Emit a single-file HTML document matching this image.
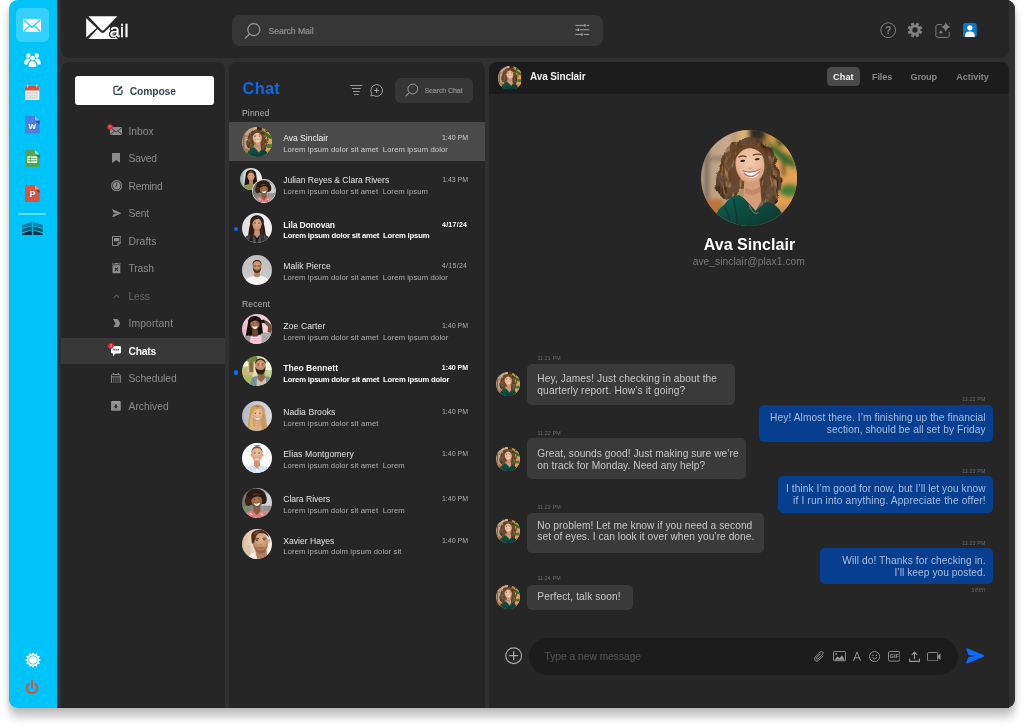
<!DOCTYPE html>
<html lang="en"><head><meta charset="utf-8"><title>Mail – Chats</title>
<style>
html,body{margin:0;padding:0}
body{width:1024px;height:726px;position:relative;overflow:hidden;background:#fff;font-family:"Liberation Sans",sans-serif;-webkit-font-smoothing:antialiased}
#win{position:absolute;left:9px;top:0;width:1006px;height:707.5px;border-radius:8.5px;background:linear-gradient(90deg,#00c3f9 48px,#303030 48px);box-shadow:0 8.5px 8px rgba(0,0,0,.235),0 1px 5px rgba(0,0,0,.09)}
#app{position:absolute;left:0;top:0;width:1024px;height:726px;will-change:transform}
.t{position:absolute;white-space:pre;line-height:1em;margin:0}
.m{-webkit-text-stroke:.22px currentColor}
.av{position:absolute;border-radius:50%;overflow:hidden;display:block}
</style></head>
<body>
<svg width="0" height="0" style="position:absolute" aria-hidden="true"><defs><filter id="soft" x="-5%" y="-5%" width="110%" height="110%"><feGaussianBlur stdDeviation="1.1"/></filter><filter id="soft2" x="-5%" y="-5%" width="110%" height="110%"><feGaussianBlur stdDeviation=".55"/></filter><linearGradient id="g-ava" x1="0" y1="0" x2="1" y2="0"><stop offset="0" stop-color="#b79b82"/><stop offset="0.28" stop-color="#c9a98a"/><stop offset="0.45" stop-color="#b08a68"/><stop offset="0.6" stop-color="#6a5644"/><stop offset="0.74" stop-color="#d89a50"/><stop offset="1" stop-color="#e6aa58"/></linearGradient><radialGradient id="g-avaf" cx=".5" cy=".42" r=".6"><stop offset="0" stop-color="#f3cbb0"/><stop offset=".7" stop-color="#e8b796"/><stop offset="1" stop-color="#cf9674"/></radialGradient><radialGradient id="g-avah" cx=".45" cy=".4" r=".65"><stop offset="0" stop-color="#7a4e2a"/><stop offset=".6" stop-color="#5c3a20"/><stop offset="1" stop-color="#341f12"/></radialGradient><linearGradient id="g-avat" x1="0" y1="0" x2="1" y2="1"><stop offset="0" stop-color="#146050"/><stop offset="0.5" stop-color="#0e4a3e"/><stop offset="1" stop-color="#0a342c"/></linearGradient><filter id="curl" x="-10%" y="-10%" width="120%" height="120%"><feTurbulence type="fractalNoise" baseFrequency=".09" numOctaves="2" seed="4" result="n"/><feDisplacementMap in="SourceGraphic" in2="n" scale="9" xChannelSelector="R" yChannelSelector="G" result="d"/><feTurbulence type="fractalNoise" baseFrequency=".16 .07" numOctaves="3" seed="11" result="m"/><feColorMatrix in="m" type="matrix" values="0 0 0 0 .13  0 0 0 0 .075  0 0 0 0 .04  3.0 0 0 0 -0.95" result="dk"/><feComposite in="dk" in2="d" operator="in" result="dk2"/><feTurbulence type="fractalNoise" baseFrequency=".2 .08" numOctaves="2" seed="23" result="m2"/><feColorMatrix in="m2" type="matrix" values="0 0 0 0 .60  0 0 0 0 .38  0 0 0 0 .19  0 2.8 0 0 -1.72" result="lt"/><feComposite in="lt" in2="d" operator="in" result="lt2"/><feMerge><feMergeNode in="d"/><feMergeNode in="dk2"/><feMergeNode in="lt2"/></feMerge><feGaussianBlur stdDeviation=".45"/></filter><filter id="bgblur" x="-10%" y="-10%" width="120%" height="120%"><feGaussianBlur stdDeviation="2.4"/></filter><filter id="bgblur2" x="0" y="0" width="100%" height="100%"><feGaussianBlur stdDeviation="1.6"/></filter><radialGradient id="skinL" cx=".5" cy=".4" r=".65"><stop offset="0" stop-color="#f0c4a4"/><stop offset=".75" stop-color="#e2aa88"/><stop offset="1" stop-color="#c48a68"/></radialGradient><radialGradient id="skinM" cx=".5" cy=".4" r=".65"><stop offset="0" stop-color="#e0ac88"/><stop offset=".75" stop-color="#cc9572"/><stop offset="1" stop-color="#a87452"/></radialGradient><radialGradient id="skinD" cx=".5" cy=".4" r=".65"><stop offset="0" stop-color="#b07a56"/><stop offset=".75" stop-color="#93603f"/><stop offset="1" stop-color="#6e442c"/></radialGradient><radialGradient id="skinT" cx=".5" cy=".4" r=".65"><stop offset="0" stop-color="#d9a27c"/><stop offset=".75" stop-color="#c18a66"/><stop offset="1" stop-color="#9a6848"/></radialGradient><linearGradient id="g-jul" x1="0" y1="0" x2="1" y2="0"><stop offset="0" stop-color="#aebcc2"/><stop offset="0.35" stop-color="#dcdcd6"/><stop offset="1" stop-color="#efefe9"/></linearGradient><linearGradient id="g-cla" x1="0" y1="0" x2="1" y2="0"><stop offset="0" stop-color="#6e6a62"/><stop offset="0.45" stop-color="#8a9096"/><stop offset="1" stop-color="#b8c0c8"/></linearGradient><linearGradient id="g-lil" x1="0" y1="0" x2="1" y2="0"><stop offset="0" stop-color="#dedee0"/><stop offset="1" stop-color="#f3f3f5"/></linearGradient><linearGradient id="g-mal" x1="0" y1="0" x2="0" y2="1"><stop offset="0" stop-color="#bdbdbd"/><stop offset="1" stop-color="#cecece"/></linearGradient><linearGradient id="g-zoe" x1="0" y1="0" x2="1" y2="0"><stop offset="0" stop-color="#e6bccb"/><stop offset="0.6" stop-color="#efcbd7"/><stop offset="1" stop-color="#f4dbe3"/></linearGradient><linearGradient id="g-the" x1="0" y1="0" x2="1" y2="0.6"><stop offset="0" stop-color="#f0eed0"/><stop offset="0.3" stop-color="#b4bf74"/><stop offset="0.55" stop-color="#e9ecc6"/><stop offset="0.8" stop-color="#a0b660"/><stop offset="1" stop-color="#cdd594"/></linearGradient><linearGradient id="g-nad" x1="0" y1="0" x2="1" y2="0"><stop offset="0" stop-color="#aeb6c2"/><stop offset="0.5" stop-color="#c6ccd6"/><stop offset="1" stop-color="#d8dce2"/></linearGradient><linearGradient id="g-xav" x1="0" y1="0" x2="1" y2="0"><stop offset="0" stop-color="#d9b696"/><stop offset="0.3" stop-color="#ead2ba"/><stop offset="0.7" stop-color="#f2e4d4"/><stop offset="1" stop-color="#fbf6f0"/></linearGradient><radialGradient id="skinX" cx=".55" cy=".3" r=".75"><stop offset="0" stop-color="#e6b892"/><stop offset=".5" stop-color="#cc9670"/><stop offset="1" stop-color="#9a6646"/></radialGradient></defs><symbol id="av-ava" viewBox="0 0 100 100">
<rect width="100" height="100" fill="url(#g-ava)"/>
<g filter="url(#bgblur)">
<rect x="4" y="20" width="4" height="60" fill="#6e6258"/>
<rect x="0" y="28" width="30" height="4" fill="#8a7868"/>
<rect x="2" y="72" width="22" height="16" fill="#b8753a"/>
<rect x="38" y="-4" width="11" height="16" fill="#ddb07a"/>
<rect x="50" y="-4" width="16" height="14" fill="#33291f"/>
<rect x="76" y="8" width="26" height="74" fill="#e2a252"/>
<rect x="84" y="30" width="4" height="18" fill="#5a4630"/>
<path d="M70 12 L98 30 L100 42 L84 34 L72 22 Z" fill="#3a6a2a"/>
<path d="M76 6 L92 14 L80 18 Z" fill="#2c5522"/>
<ellipse cx="92" cy="63" rx="11" ry="7" fill="#447f34"/>
<rect x="78" y="78" width="20" height="14" fill="#c98f52"/>
</g>
<g filter="url(#curl)">
<path d="M47 9 C62 6 76 16 78 32 C84 44 84 58 80 70 C78 80 72 86 66 84 L60 60 L40 60 L34 72 C28 76 20 72 17 64 C12 54 16 42 20 34 C22 20 32 10 47 9 Z" fill="url(#g-avah)"/>
<path d="M22 40 C20 50 22 60 26 66 M30 24 C26 32 26 42 28 50 M72 30 C78 40 78 52 74 62 M68 64 C72 70 72 78 68 82" fill="none" stroke="#a8733f" stroke-width="2.4" stroke-linecap="round" opacity=".8"/>
<path d="M26 52 C24 58 26 64 30 68 M76 48 C80 56 78 66 74 72 M62 12 C70 16 74 24 75 30" fill="none" stroke="#2e1c10" stroke-width="2.2" stroke-linecap="round" opacity=".7"/>
</g>
<g filter="url(#soft2)">
<path d="M13 100 C14 88 18 82 24 78 C28 72 34 67 40 68 L46 72 L57 84 L68 75 C76 76 86 82 88 100 Z" fill="url(#g-avat)"/>
<path d="M45 54 L61 52 L63 74 L57 84 L44 70 Z" fill="#d39c7a"/>
<path d="M46 60 Q54 66 62 58 L62 64 Q54 70 46 66 Z" fill="#b98262" opacity=".7"/>
<ellipse cx="51" cy="36" rx="15" ry="20" fill="url(#g-avaf)" transform="rotate(-6 51 36)"/>
<path d="M34 36 C34 22 42 14 52 14 C62 14 68 22 68 32 C64 24 58 19 50 19 C42 20 37 26 34 36 Z" fill="#6a4426"/>
<path d="M44 43 Q53 46 62 41 Q60 50 53 50 Q46 50 44 43 Z" fill="#fff"/>
<path d="M43.5 42.5 Q53 46 62.5 40.5" fill="none" stroke="#b0604e" stroke-width="1.1"/>
<path d="M44.5 44.5 Q52 53 61.5 43" fill="none" stroke="#c0705c" stroke-width="1.3"/>
<ellipse cx="43.5" cy="32.2" rx="2.6" ry="1.1" fill="#3a2418" transform="rotate(-6 43.5 32.2)"/><ellipse cx="58.5" cy="30.4" rx="2.6" ry="1.1" fill="#3a2418" transform="rotate(-6 58.5 30.4)"/>
<path d="M39 28.5 Q43 26 47.5 28 M54 26.5 Q58.5 24 63 26" fill="none" stroke="#6a4630" stroke-width="1.4"/>
<path d="M49.5 39.5 Q51.5 40.6 53.5 39.3" fill="none" stroke="#c98e70" stroke-width="1"/>
<path d="M50 78 Q55 90 60 86" fill="none" stroke="#c8a878" stroke-width=".7"/>
<path d="M24 80 C28 84 30 92 30 100 M34 72 C36 82 38 92 38 100" fill="none" stroke="#0a342c" stroke-width="1.5" opacity=".7"/>
</g>
</symbol><symbol id="av-jul" viewBox="0 0 100 100"><g filter="url(#bgblur2)"><rect x="-5" y="-5" width="110" height="110" fill="url(#g-jul)"/><rect x="-5" y="10" width="18" height="70" fill="#9fb4a8"/></g><g filter="url(#soft2)" transform="translate(50 40) scale(1.18) translate(-50 -40)">
<path d="M30 32 C30 6 70 6 70 32 L76 74 L24 74 Z" fill="#241812"/>
<path d="M6 104 C8 78 28 68 50 68 C72 68 92 78 94 104 Z" fill="#8f9454"/>
<path d="M43 52 L57 52 L58 68 Q50 74 42 68 Z" fill="#b98a68"/>
<ellipse cx="50" cy="38" rx="14" ry="18" fill="url(#skinM)"/>
<path d="M35 38 C33 16 67 16 65 38 C61 26 55 23 50 23 C44 23 38 27 35 38 Z" fill="#241812"/>
<path d="M44 45.5 Q50 50 56 45.5 Q50 47.5 44 45.5 Z" fill="#fff" stroke="#a0584a" stroke-width=".6"/>
<ellipse cx="44.5" cy="36" rx="1.8" ry="1.1" fill="#2a1a14"/><ellipse cx="55.5" cy="36" rx="1.8" ry="1.1" fill="#2a1a14"/>
</g></symbol><symbol id="av-cla" viewBox="0 0 100 100"><g filter="url(#bgblur2)"><rect x="-5" y="-5" width="110" height="110" fill="url(#g-cla)"/>
<rect x="62" y="18" width="44" height="40" fill="#ccd4da"/><rect x="-5" y="60" width="30" height="24" fill="#7c8868"/><rect x="70" y="60" width="36" height="18" fill="#9a9488"/></g><g filter="url(#soft2)" transform="translate(50 44) scale(1.12) translate(-50 -44)">
<ellipse cx="47" cy="32" rx="30" ry="26" fill="#2a1c14"/>
<ellipse cx="24" cy="44" rx="10" ry="14" fill="#3a2618"/><ellipse cx="70" cy="38" rx="9" ry="14" fill="#2a1c14"/>
<path d="M2 104 C6 80 26 70 48 72 C72 70 92 80 98 104 Z" fill="#db7f80"/>
<path d="M16 86 l6 3 M30 80 l5 4 M62 82 l6 2 M76 90 l5 2 M46 94 l5 2 M22 96 l5 2 M68 94 l5 3 M84 84 l4 3" stroke="#f8dcd8" stroke-width="3.2" stroke-linecap="round"/>
<path d="M38 58 L60 56 L60 74 L50 86 L40 76 Z" fill="#8a5a3c"/>
<ellipse cx="49" cy="42" rx="16.5" ry="20" fill="url(#skinD)" transform="rotate(-8 49 42)"/>
<path d="M31 40 C30 22 62 16 67 36 C60 27 42 28 31 40 Z" fill="#2a1c14"/>
<path d="M40 49 Q50 54 60 47 Q57 58 49 58 Q42 57 40 49 Z" fill="#fff"/>
<path d="M39.5 48.5 Q50 54 60.5 46.5" fill="none" stroke="#6e3a2a" stroke-width="1"/>
<ellipse cx="42.5" cy="39" rx="2" ry="1.1" fill="#1c100a"/><ellipse cx="56" cy="37" rx="2" ry="1.1" fill="#1c100a"/>
</g></symbol><symbol id="av-lil" viewBox="0 0 100 100"><g filter="url(#bgblur2)"><rect x="-5" y="-5" width="110" height="110" fill="url(#g-lil)"/></g><g filter="url(#soft2)" transform="translate(50 37) scale(1.08) translate(-50 -40)">
<path d="M29 38 C24 4 76 4 71 38 C76 56 76 72 80 90 L20 90 C24 72 24 56 29 38 Z" fill="#2e1d16"/>
<path d="M0 104 C4 78 24 70 50 70 C76 70 96 78 100 104 Z" fill="#3c3d43"/>
<path d="M36 74 L50 100 L40 104 L24 80 Z M64 74 L50 100 L60 104 L76 80 Z" fill="#4c4d54"/>
<path d="M41 72 L50 98 L59 72 Z" fill="#141416"/>
<path d="M42 56 L58 56 L59 72 L50 84 L41 72 Z" fill="#c69272"/>
<ellipse cx="50" cy="40" rx="15" ry="19.5" fill="url(#skinM)"/>
<path d="M34 42 C29 14 71 14 66 42 C63 27 57 23 52 24 C44 24 38 29 34 42 Z" fill="#2e1d16"/>
<path d="M63 40 C71 58 68 78 74 92 L62 92 C64 76 64 60 63 40 Z" fill="#402a20"/>
<path d="M37 40 C29 58 32 78 26 92 L38 92 C36 76 36 60 37 40 Z" fill="#2e1d16"/>
<path d="M43.5 48.5 Q50 53 56.5 48.5 Q50 51 43.5 48.5 Z" fill="#fff" stroke="#a0584a" stroke-width=".7"/>
<ellipse cx="44" cy="38" rx="2" ry="1.2" fill="#24140e"/><ellipse cx="56" cy="38" rx="2" ry="1.2" fill="#24140e"/>
<path d="M41 34.5 H47 M53 34.5 H59" stroke="#2e1d16" stroke-width="1.1"/>
</g></symbol><symbol id="av-mal" viewBox="0 0 100 100"><g filter="url(#bgblur2)"><rect x="-5" y="-5" width="110" height="110" fill="url(#g-mal)"/></g><g filter="url(#soft2)" transform="translate(50 41) scale(1.0) translate(-50 -40)">
<path d="M4 104 C6 78 24 68 50 68 C76 68 94 78 96 104 Z" fill="#f4f4f4"/>
<path d="M38 70 Q50 80 62 70" fill="none" stroke="#dcdcdc" stroke-width="1.6"/>
<path d="M41 54 L59 54 L60 69 Q50 77 40 69 Z" fill="#b88460"/>
<ellipse cx="50" cy="36" rx="14" ry="18.5" fill="url(#skinT)"/>
<path d="M36 38 C36.5 56 44 59 50 59 C56 59 63.5 56 64 38 C62 47 57 48 50 48 C43 48 38 47 36 38 Z" fill="#4a3224"/>
<path d="M35 33 C32 10 68 10 65 33 C62 22 56 19 50 19 C44 19 38 22 35 33 Z" fill="#261a13"/>
<path d="M45 50 Q50 53.5 55 50 Q50 51.5 45 50 Z" fill="#fff"/>
<path d="M38 33.5 H47.5 V38 Q43 39.5 38 38 Z M52.5 33.5 H62 V38 Q57 39.5 52.5 38 Z" fill="none" stroke="#3a2a20" stroke-width=".9"/>
<ellipse cx="43.5" cy="35.5" rx="1.7" ry="1.1" fill="#24140e"/><ellipse cx="56.5" cy="35.5" rx="1.7" ry="1.1" fill="#24140e"/>
</g></symbol><symbol id="av-zoe" viewBox="0 0 100 100"><g filter="url(#bgblur2)"><rect x="-5" y="-5" width="110" height="110" fill="url(#g-zoe)"/></g><g filter="url(#soft2)" transform="translate(46 40) scale(1.08) translate(-46 -40)">
<path d="M22 30 C20 2 66 2 64 30 L70 78 L12 88 Z" fill="#15100e"/>
<path d="M58 104 L62 64 C74 56 98 60 104 72 L104 104 Z" fill="#aaa8a9"/>
<path d="M-4 104 L4 78 C12 68 26 68 30 72 L34 104 Z" fill="#9c9a9b"/>
<path d="M27 104 L30 70 L64 66 L63 104 Z" fill="#f3b4cc"/>
<path d="M29 75 H63 M28.5 82 H63 M28 89 H63 M28 96 H63" stroke="#fdf0f4" stroke-width="2.6"/>
<path d="M66 26 C72 20 80 22 84 28 L98 40 L94 62 L82 58 L84 42 Z" fill="#7a4e36"/>
<path d="M60 22 L72 20 L74 30 L64 32 Z" fill="#15100e"/>
<path d="M35 50 L52 50 L54 69 Q44 76 34 70 Z" fill="#6e442e"/>
<ellipse cx="43" cy="33" rx="14.5" ry="18.5" fill="url(#skinD)"/>
<path d="M27 34 C25 8 61 8 59 34 C54 20 36 19 27 34 Z" fill="#15100e"/>
<path d="M34.5 40 Q43 45 52 39 Q50 49 43 49 Q36 48 34.5 40 Z" fill="#fff"/>
<ellipse cx="37.5" cy="30.5" rx="1.9" ry="1.1" fill="#120a08"/><ellipse cx="49.5" cy="30" rx="1.9" ry="1.1" fill="#120a08"/>
</g></symbol><symbol id="av-the" viewBox="0 0 100 100"><g filter="url(#bgblur2)"><rect x="-5" y="-5" width="110" height="110" fill="url(#g-the)"/>
<rect x="-5" y="-5" width="26" height="40" fill="#f6f5e6"/><rect x="-5" y="50" width="44" height="12" fill="#dcae80"/><rect x="-5" y="62" width="40" height="45" fill="#a9bd62"/>
<rect x="24" y="-5" width="14" height="58" fill="#86684a"/><ellipse cx="30" cy="8" rx="22" ry="12" fill="#6f8a3a"/>
<ellipse cx="90" cy="34" rx="16" ry="14" fill="#f4f3dc"/><rect x="78" y="50" width="30" height="14" fill="#c9d08e"/></g><g filter="url(#soft2)" transform="translate(58 40) scale(1.1) translate(-62 -40)">
<path d="M30 104 L38 70 C48 61 88 61 98 72 L104 104 Z" fill="#7b92a3"/>
<path d="M42 74 C48 84 52 94 52 104 M92 76 C86 86 84 94 84 104" fill="none" stroke="#5e7486" stroke-width="2"/>
<path d="M52 104 L55 72 L81 70 L84 104 Z" fill="#cfc3ad"/>
<path d="M56 52 L76 50 L78 72 L68 84 L58 74 Z" fill="#96664a"/>
<ellipse cx="65" cy="32" rx="15.5" ry="19.5" fill="url(#skinT)"/>
<path d="M49.5 35 C50 57 58 60 66 60 C74 60 80 55 80.5 33 C77 44 72 46 65 46 C58 46 52 45 49.5 35 Z" fill="#2a211d"/>
<path d="M49 29 C46 5 84 5 81 29 C77 18 71 15 65 15 C59 15 53 18 49 29 Z" fill="#261c18"/>
<ellipse cx="58.5" cy="31" rx="1.9" ry="1.1" fill="#1c120e"/><ellipse cx="71.5" cy="31" rx="1.9" ry="1.1" fill="#1c120e"/>
<path d="M55 27.5 H62 M68 27.5 H75" stroke="#261c18" stroke-width="1.3"/>
</g></symbol><symbol id="av-nad" viewBox="0 0 100 100"><g filter="url(#bgblur2)"><rect x="-5" y="-5" width="110" height="110" fill="url(#g-nad)"/></g><g filter="url(#soft2)" transform="translate(52 44) scale(1.15) translate(-54 -42)">
<path d="M31 38 C27 6 79 6 75 38 C80 56 80 74 86 94 L22 94 C28 74 27 56 31 38 Z" fill="#c99f60"/>
<path d="M10 104 C12 86 28 77 54 77 C78 77 92 86 94 104 Z" fill="#e3b394"/>
<path d="M33 104 L38 85 Q54 97 69 85 L75 104 Z" fill="#6d7b59"/>
<path d="M46 58 L62 58 L63 80 Q54 88 45 80 Z" fill="#dcaa8a"/>
<ellipse cx="54" cy="42" rx="15.5" ry="19.5" fill="url(#skinL)"/>
<path d="M37 46 C32 13 76 13 71 46 C68 29 62 25 55 27 C47 27 41 33 37 46 Z" fill="#d2a866"/>
<path d="M46 20 C50 17 58 17 62 20 C58 22 50 22 46 20 Z" fill="#9a7644"/>
<path d="M37 40 C30 60 34 80 27 96 L42 96 C42 78 40 60 40 42 Z" fill="#dcb878"/>
<path d="M71 40 C77 60 73 80 80 96 L66 96 C66 78 68 60 68 42 Z" fill="#c29858"/>
<path d="M46.5 50.5 Q54 55.5 61.5 50.5 Q59 58 54 58 Q49 58 46.5 50.5 Z" fill="#fff"/>
<path d="M46 50 Q54 55.5 62 50" fill="none" stroke="#b4604e" stroke-width=".9"/>
<ellipse cx="47.5" cy="40" rx="2" ry="1.2" fill="#463020"/><ellipse cx="60.5" cy="40" rx="2" ry="1.2" fill="#463020"/>
<path d="M44.5 36.5 H50.5 M57.5 36.5 H63.5" stroke="#9a7644" stroke-width="1"/>
</g></symbol><symbol id="av-eli" viewBox="0 0 100 100"><g filter="url(#bgblur2)"><rect x="-5" y="-5" width="110" height="110" fill="#ffffff"/></g><g filter="url(#soft2)" transform="translate(50 40) scale(1.14) translate(-50 -40)">
<path d="M0 104 C4 78 26 71 50 71 C74 71 96 78 100 104 Z" fill="#d3e3f4"/>
<path d="M22 82 C26 90 28 98 28 104 M78 82 C74 90 72 98 72 104" fill="none" stroke="#b4c8de" stroke-width="1.6"/>
<path d="M38 72 L50 90 L62 72 L57 66 L43 66 Z" fill="#eef4fb"/>
<path d="M38 72 L45 84 L50 78 Z M62 72 L55 84 L50 78 Z" fill="#c0d4ea"/>
<path d="M42 56 L58 56 L59 70 L50 80 L41 70 Z" fill="#d0916f"/>
<ellipse cx="33.5" cy="40" rx="2.6" ry="4.6" fill="#d69a7a"/><ellipse cx="66.5" cy="40" rx="2.6" ry="4.6" fill="#d69a7a"/>
<ellipse cx="50" cy="38" rx="15.5" ry="20.5" fill="url(#skinL)"/>
<path d="M34 35 C31 8 69 8 66 35 C63 23 57 19.5 50 19.5 C43 19.5 37 23 34 35 Z" fill="#6b5646"/>
<path d="M40 14 C46 10 56 10 62 15 C56 13 46 13 40 14 Z" fill="#8a7462"/>
<path d="M42.5 48 Q50 53 57.5 48 Q55.5 55 50 55 Q44.5 55 42.5 48 Z" fill="#fff"/>
<path d="M42 47.5 Q50 53 58 47.5" fill="none" stroke="#a85a48" stroke-width=".9"/>
<ellipse cx="43.5" cy="36" rx="2" ry="1.2" fill="#42301f"/><ellipse cx="56.5" cy="36" rx="2" ry="1.2" fill="#42301f"/>
<path d="M40 32.5 H47 M53 32.5 H60" stroke="#6b5646" stroke-width="1.1"/>
<path d="M38 44 Q41 47 42 51 M62 44 Q59 47 58 51" fill="none" stroke="#c98e70" stroke-width=".8"/>
</g></symbol><symbol id="av-xav" viewBox="0 0 100 100"><g filter="url(#bgblur2)"><rect x="-5" y="-5" width="110" height="110" fill="url(#g-xav)"/><rect x="-5" y="55" width="34" height="50" fill="#dcc4a8"/></g><g filter="url(#soft2)" transform="translate(50 50) scale(1.0) translate(-50 -50)">
<path d="M18 104 C22 84 34 76 48 78 L56 104 Z" fill="#f7f3ee"/>
<path d="M74 104 C78 82 88 72 100 72 L104 104 Z" fill="#fdfbf8"/>
<path d="M44 72 L82 70 L84 104 L50 104 Z" fill="#b47e5a"/>
<path d="M44 78 L52 104 L40 104 Z" fill="#e9e2d8"/>
<ellipse cx="35" cy="42" rx="4" ry="8" fill="#b98462"/><ellipse cx="90" cy="40" rx="3" ry="7" fill="#d2a07c"/>
<ellipse cx="62" cy="46" rx="25.5" ry="33" fill="url(#skinX)"/>
<path d="M36 50 C26 22 30 6 52 3 C70 0 88 8 90 30 C84 18 74 13 62 14 C50 14 46 22 44 34 C42 40 40 46 36 50 Z" fill="#4a2e1c"/>
<path d="M40 14 C46 8 56 6 64 8 C56 10 48 14 44 22 Z" fill="#7a5030"/>
<path d="M42 58 C44 78 54 82 63 82 C74 82 82 76 84 56 C80 68 72 72 63 72 C54 72 46 68 42 58 Z" fill="#8a5c40" opacity=".6"/>
<path d="M52 64 Q62 60.5 74 64 Q62 67 52 64 Z" fill="#a85a48"/>
<path d="M50 62 Q62 58 76 62" fill="none" stroke="#7a4a34" stroke-width="1.6" opacity=".7"/>
<path d="M58 50 Q63 53 68 50" fill="none" stroke="#96623f" stroke-width="1.3"/>
<ellipse cx="50" cy="37" rx="4.2" ry="1.9" fill="#2a1a12"/><ellipse cx="74" cy="36" rx="4.2" ry="1.9" fill="#2a1a12"/>
<path d="M43 32.5 Q50 29.5 57 32.5 M67 31.5 Q74 28.5 81 31.5" fill="none" stroke="#3a2416" stroke-width="2.4"/>
</g></symbol></svg>
<div id="app">
<div id="win"></div>
<div class="topbar" style="position:absolute;left:60.5px;top:-8px;width:948.5px;height:66px;background:#262626;border-radius:8px;"></div>
<div class="nav" style="position:absolute;left:60.5px;top:62px;width:164.5px;height:645.5px;background:#262626;border-radius:8px 8px 0 0;"></div>
<div class="chatlist" style="position:absolute;left:229px;top:62px;width:256px;height:645.5px;background:#262626;border-radius:8px 8px 0 0;"></div>
<div class="chatpanel" style="position:absolute;left:489px;top:62px;width:520px;height:645.5px;background:#262626;border-radius:8px 8px 0 0;"></div>
<div class="chathead" style="position:absolute;left:489px;top:62px;width:520px;height:31.6px;background:#1c1c1c;border-radius:8px 8px 0 0;"></div>
<div style="position:absolute;left:15.5px;top:8px;width:33.5px;height:34px;background:#33d1fc;border-radius:5px;"></div>
<svg style="position:absolute;left:23px;top:19px;" width="18" height="13" viewBox="0 0 18 13"><rect width="18" height="13" rx="0.8" fill="#fff"/><path d="M0.6 0.8 L9 8.2 L17.4 0.8 M0.8 12.4 L6.6 6.4 M17.2 12.4 L11.4 6.4" fill="none" stroke="#33d1fc" stroke-width="1.4"/></svg>
<svg style="position:absolute;left:24px;top:53.2px;" width="17" height="14" viewBox="0 0 17 14"><g fill="#fff"><circle cx="4.3" cy="2.6" r="2.3"/><circle cx="12.7" cy="2.6" r="2.3"/><path d="M0.2 11.2 C0.2 6.8 2 5.4 4.3 5.4 C5.6 5.4 6.4 5.8 7 6.4 L5 11.6 Q2 11.8 0.2 11.2 Z"/><path d="M16.8 11.2 C16.8 6.8 15 5.4 12.7 5.4 C11.4 5.4 10.6 5.8 10 6.4 L12 11.6 Q15 11.8 16.8 11.2 Z"/></g><circle cx="8.5" cy="5.2" r="3.1" fill="#00c3f9"/><path d="M4 14 C4 9 6 7.6 8.5 7.6 C11 7.6 13 9 13 14 Z" fill="#00c3f9" stroke="#00c3f9" stroke-width="1.4"/><circle cx="8.5" cy="5.2" r="2.4" fill="#fff"/><path d="M4.6 13.6 C4.6 9.4 6.2 8.2 8.5 8.2 C10.8 8.2 12.4 9.4 12.4 13.6 C10 14.2 7 14.2 4.6 13.6 Z" fill="#fff"/></svg>
<svg style="position:absolute;left:25.3px;top:83.6px;" width="14.4" height="16.6" viewBox="0 0 14.4 16.6"><rect x="0" y="1.8" width="14.4" height="14.6" rx="1.4" fill="#ededed"/><path d="M0 6.4 V3.2 Q0 1.8 1.4 1.8 H13 Q14.4 1.8 14.4 3.2 V6.4 Z" fill="#d9533c"/><rect x="2.1" y="0.2" width="1.1" height="3.2" rx=".5" fill="#d8d8d8"/><rect x="11.2" y="0.2" width="1.1" height="3.2" rx=".5" fill="#d8d8d8"/><g fill="#d2d2d2"><rect x="1.7" y="8.0" width="1.7" height="1.9"/><rect x="4.0" y="8.0" width="1.7" height="1.9"/><rect x="6.3" y="8.0" width="1.7" height="1.9"/><rect x="8.6" y="8.0" width="1.7" height="1.9"/><rect x="10.9" y="8.0" width="1.7" height="1.9"/><rect x="1.7" y="10.6" width="1.7" height="1.9"/><rect x="4.0" y="10.6" width="1.7" height="1.9"/><rect x="6.3" y="10.6" width="1.7" height="1.9"/><rect x="8.6" y="10.6" width="1.7" height="1.9"/><rect x="10.9" y="10.6" width="1.7" height="1.9"/><rect x="1.7" y="13.2" width="1.7" height="1.9"/><rect x="4.0" y="13.2" width="1.7" height="1.9"/><rect x="6.3" y="13.2" width="1.7" height="1.9"/><rect x="8.6" y="13.2" width="1.7" height="1.9"/><rect x="10.9" y="13.2" width="1.7" height="1.9"/></g></svg>
<svg style="position:absolute;left:25px;top:116.3px;" width="14.6" height="17.4" viewBox="0 0 14.6 17.4"><path d="M1 0 H10 L14.6 4.6 V16.4 Q14.6 17.4 13.6 17.4 H1 Q0 17.4 0 16.4 V1 Q0 0 1 0 Z" fill="#4b7fe3"/><path d="M10 4.6 H14.6 V8.6 Z" fill="#2e4c9c"/><path d="M10 0 L14.6 4.6 H10.8 Q10 4.6 10 3.8 Z" fill="#9db4f0"/><text x="7.3" y="12.7" font-family="Liberation Sans, sans-serif" font-weight="700" font-size="8.1" fill="#fff" text-anchor="middle">W</text></svg>
<svg style="position:absolute;left:25px;top:149.9px;" width="14.6" height="17.4" viewBox="0 0 14.6 17.4"><path d="M1 0 H10 L14.6 4.6 V16.4 Q14.6 17.4 13.6 17.4 H1 Q0 17.4 0 16.4 V1 Q0 0 1 0 Z" fill="#52a35a"/><path d="M10 4.6 H14.6 V8.6 Z" fill="#2b7a48"/><path d="M10 0 L14.6 4.6 H10.8 Q10 4.6 10 3.8 Z" fill="#93e8a0"/><rect x="2.2" y="6.2" width="10" height="6.8" rx=".6" fill="#e4f3e5"/><path d="M2.8 8.4 H11.6 M2.8 10.6 H11.6 M5.4 6.8 V12.6" stroke="#52a35a" stroke-width=".8"/></svg>
<svg style="position:absolute;left:25px;top:185px;" width="14.6" height="17.4" viewBox="0 0 14.6 17.4"><path d="M1 0 H10 L14.6 4.6 V16.4 Q14.6 17.4 13.6 17.4 H1 Q0 17.4 0 16.4 V1 Q0 0 1 0 Z" fill="#d65540"/><path d="M10 4.6 H14.6 V8.6 Z" fill="#a83a2a"/><path d="M10 0 L14.6 4.6 H10.8 Q10 4.6 10 3.8 Z" fill="#f09a88"/><text x="7.6" y="12.2" font-family="Liberation Sans, sans-serif" font-weight="700" font-size="9" fill="#fff" text-anchor="middle">P</text></svg>
<div style="position:absolute;left:18px;top:213px;width:28px;height:2px;background:#66dcff;border-radius:1px;"></div>
<svg style="position:absolute;left:22.1px;top:221.8px;" width="20.8" height="13" viewBox="0 0 20.8 13"><path d="M0 3.1 L9.9 0 V3.7 L0 6.1 Z M20.8 3.1 L10.9 0 V3.7 L20.8 6.1 Z" fill="#0b7f9d"/><path d="M0 7.1 L9.9 4.3 V7.7 L0 10.1 Z M20.8 7.1 L10.9 4.3 V7.7 L20.8 10.1 Z" fill="#075c73"/><path d="M0 11.4 L9.9 8.3 V13 H0 Z M20.8 11.4 L10.9 8.3 V13 H20.8 Z" fill="#04313e"/></svg>
<svg style="position:absolute;left:24.5px;top:652.3px;" width="16" height="16" viewBox="0 0 16 16"><polygon points="8.00,0.10 9.53,2.30 11.95,1.16 12.17,3.83 14.84,4.05 13.70,6.47 15.90,8.00 13.70,9.53 14.84,11.95 12.17,12.17 11.95,14.84 9.53,13.70 8.00,15.90 6.47,13.70 4.05,14.84 3.83,12.17 1.16,11.95 2.30,9.53 0.10,8.00 2.30,6.47 1.16,4.05 3.83,3.83 4.05,1.16 6.47,2.30" fill="#fff"/><circle cx="8" cy="8" r="4.6" fill="#00c3f9"/><circle cx="8" cy="8" r="3.8" fill="#fff"/></svg>
<svg style="position:absolute;left:25px;top:680px;" width="14" height="15" viewBox="0 0 14 15"><path d="M3.6 3.8 A5.3 5.3 0 1 0 10.4 3.8" fill="none" stroke="#d9533c" stroke-width="2" stroke-linecap="round"/><path d="M7 1 V7.4" stroke="#d9533c" stroke-width="2" stroke-linecap="round"/></svg>
<svg style="position:absolute;left:85.6px;top:15.6px;" width="32" height="23.4" viewBox="0 0 32 23.4"><g fill="#fff"><path d="M0.2 2.2 L10.6 11.9 L0.2 21.4 Z"/><path d="M2.4 0.2 H31.4 L18 14 Q16.7 15.2 15.4 14 Z"/><path d="M2.2 23.1 L11.5 13 L15 16.3 Q16.7 17.6 18.4 16.3 L23.8 11 L31.4 17 V23.1 Z"/></g></svg>
<span class="t" style="top:22.16px;font-size:18.0px;color:#fff;left:109.70px;letter-spacing:0.397px;text-shadow:-1px 0 0 #262626,0 1px 0 #262626,0 -1px 0 #262626,-1px -1px 0 #262626,-1px 1px 0 #262626,-1.4px 0 0 #262626;-webkit-text-stroke:.3px #fff;">ail</span>
<div class="search" style="position:absolute;left:232px;top:15px;width:371px;height:31px;background:#363636;border-radius:8px;"></div>
<svg style="position:absolute;left:244px;top:22px;" width="18" height="18" viewBox="0 0 18 18"><circle cx="9.8" cy="7.6" r="6" fill="none" stroke="#9a9a9a" stroke-width="1.2"/><path d="M5.6 12 L1.4 16" stroke="#9a9a9a" stroke-width="1.3" stroke-linecap="round"/></svg>
<span class="t m" style="top:26.64px;font-size:8.7px;color:#8f8f8f;left:268.60px;letter-spacing:-0.085px;">Search Mail</span>
<svg style="position:absolute;left:575px;top:23px;" width="15" height="14" viewBox="0 0 15 14"><g stroke="#b0b0b0" stroke-width=".9" fill="none"><path d="M0.4 2.4 H9.4 M11.6 2.4 H14.2 M0.4 6.8 H2.6 M5 6.8 H14.2 M0.4 11.4 H6.4 M8.6 11.4 H14.2"/></g><g fill="#b0b0b0"><rect x="9.2" y="1.2" width="1.4" height="2.4"/><rect x="2.6" y="5.6" width="1.6" height="2.4"/><rect x="6.2" y="10.2" width="1.4" height="2.4"/></g></svg>
<svg style="position:absolute;left:879.6px;top:21.6px;" width="16.4" height="16.4" viewBox="0 0 16.4 16.4"><circle cx="8.2" cy="8.2" r="7.4" fill="none" stroke="#808080" stroke-width="1"/><text x="8.2" y="11.8" text-anchor="middle" font-family="Liberation Sans, sans-serif" font-weight="700" font-size="10" fill="#808080">?</text></svg>
<svg style="position:absolute;left:907.2px;top:21.7px;" width="16" height="16" viewBox="-8 -8 16 16"><g fill="#808080"><rect x="-1.55" y="-7.4" width="3.1" height="3.4" rx=".5" transform="rotate(22.5)"/><rect x="-1.55" y="-7.4" width="3.1" height="3.4" rx=".5" transform="rotate(67.5)"/><rect x="-1.55" y="-7.4" width="3.1" height="3.4" rx=".5" transform="rotate(112.5)"/><rect x="-1.55" y="-7.4" width="3.1" height="3.4" rx=".5" transform="rotate(157.5)"/><rect x="-1.55" y="-7.4" width="3.1" height="3.4" rx=".5" transform="rotate(202.5)"/><rect x="-1.55" y="-7.4" width="3.1" height="3.4" rx=".5" transform="rotate(247.5)"/><rect x="-1.55" y="-7.4" width="3.1" height="3.4" rx=".5" transform="rotate(292.5)"/><rect x="-1.55" y="-7.4" width="3.1" height="3.4" rx=".5" transform="rotate(337.5)"/></g><circle r="4" fill="none" stroke="#808080" stroke-width="2.7"/></svg>
<svg style="position:absolute;left:934.6px;top:21.4px;" width="17" height="17" viewBox="0 0 17 17"><path d="M7 3.6 H2.7 Q0.9 3.6 0.9 5.4 V14.6 Q0.9 16.4 2.7 16.4 H12.4 Q14.2 16.4 14.2 14.6 V10.8" fill="none" stroke="#808080" stroke-width="1"/><path d="M10.8 0.8 Q11.5 5.2 15.8 6 Q11.5 6.8 10.8 11.2 Q10.1 6.8 5.8 6 Q10.1 5.2 10.8 0.8 Z" fill="#808080"/><path d="M5.9 8.9 Q6.2 10.8 8.2 11.2 Q6.2 11.6 5.9 13.5 Q5.6 11.6 3.6 11.2 Q5.6 10.8 5.9 8.9 Z" fill="#808080"/><circle cx="14.6" cy="2.7" r=".55" fill="#808080"/></svg>
<svg style="position:absolute;left:963.2px;top:23.1px;" width="13.8" height="14.2" viewBox="0 0 13.8 14.2"><rect width="13.8" height="14.2" rx="2" fill="#0a78c8"/><circle cx="6.9" cy="4.8" r="2.6" fill="#fff"/><path d="M2.2 14.2 V12 Q2.2 8.6 6.9 8.6 Q11.6 8.6 11.6 12 V14.2 Z" fill="#fff"/></svg>
<div class="compose" style="position:absolute;left:75.3px;top:75.5px;width:138.8px;height:29.6px;background:#fff;border-radius:3px;"></div>
<svg style="position:absolute;left:113px;top:85.4px;" width="10.2" height="10.2" viewBox="0 0 10.2 10.2"><path d="M5 1.3 H2.4 Q1 1.3 1 2.7 V7.9 Q1 9.3 2.4 9.3 H7.6 Q9 9.3 9 7.9 V5.4" fill="none" stroke="#33475b" stroke-width="1.3" stroke-linecap="round"/><path d="M4.2 6.2 L4.6 4.4 L8.2 0.8 L9.6 2.2 L6 5.8 Z" fill="#33475b"/></svg>
<span class="t" style="top:86.68px;font-size:10.3px;color:#33475b;left:129.80px;letter-spacing:-0.133px;font-weight:700;">Compose</span>
<div class="navsel" style="position:absolute;left:60.5px;top:338px;width:164.5px;height:25.6px;background:#383838;border-radius:0;"></div>
<span class="t" style="top:126.88px;font-size:10.3px;color:#8c8c8c;left:128.50px;letter-spacing:-0.039px;">Inbox</span>
<span class="t" style="top:154.38px;font-size:10.3px;color:#8c8c8c;left:128.50px;letter-spacing:-0.201px;">Saved</span>
<span class="t" style="top:181.88px;font-size:10.3px;color:#8c8c8c;left:128.50px;letter-spacing:-0.232px;">Remind</span>
<span class="t" style="top:209.38px;font-size:10.3px;color:#8c8c8c;left:128.50px;letter-spacing:-0.172px;">Sent</span>
<span class="t" style="top:236.88px;font-size:10.3px;color:#8c8c8c;left:128.50px;letter-spacing:0.105px;">Drafts</span>
<span class="t" style="top:264.38px;font-size:10.3px;color:#8c8c8c;left:128.50px;letter-spacing:-0.129px;">Trash</span>
<span class="t" style="top:291.88px;font-size:10.3px;color:#666;left:128.50px;letter-spacing:-0.139px;">Less</span>
<span class="t" style="top:319.38px;font-size:10.3px;color:#8c8c8c;left:128.50px;letter-spacing:0.132px;">Important</span>
<span class="t" style="top:346.88px;font-size:10.3px;color:#fff;left:128.50px;letter-spacing:-0.224px;font-weight:700;">Chats</span>
<span class="t" style="top:374.38px;font-size:10.3px;color:#8c8c8c;left:128.50px;letter-spacing:-0.053px;">Scheduled</span>
<span class="t" style="top:401.88px;font-size:10.3px;color:#8c8c8c;left:128.50px;letter-spacing:0.028px;">Archived</span>
<svg style="position:absolute;left:109.8px;top:126.8px;" width="12.4" height="8" viewBox="0 0 12.4 8"><rect width="12.4" height="8" rx=".8" fill="#8c8c8c"/><path d="M0.4 0.6 L6.2 5 L12 0.6 M0.5 7.6 L4.6 3.8 M11.9 7.6 L7.8 3.8" fill="none" stroke="#262626" stroke-width=".8"/></svg>
<svg style="position:absolute;left:107px;top:123.6px;" width="6" height="6" viewBox="0 0 6 6"><circle cx="3" cy="3" r="2.7" fill="#f0283c"/><circle cx="3" cy="2.6" r=".7" fill="#fbb"/></svg>
<svg style="position:absolute;left:111.8px;top:153.3px;" width="8.4" height="10" viewBox="0 0 8.4 10"><path d="M0.6 0 H7.8 Q8.4 0 8.4 .6 V10 L4.2 7 L0 10 V.6 Q0 0 .6 0 Z" fill="#8c8c8c"/></svg>
<svg style="position:absolute;left:110.6px;top:179.5px;" width="11.4" height="11.4" viewBox="0 0 11.4 11.4"><circle cx="5.7" cy="5.7" r="5.1" fill="none" stroke="#8c8c8c" stroke-width="1.1"/><circle cx="5.7" cy="5.7" r="3.7" fill="#8c8c8c"/><path d="M5.7 3.2 V5.9 L4.2 7" fill="none" stroke="#262626" stroke-width=".8"/></svg>
<svg style="position:absolute;left:111.8px;top:208.9px;" width="9.4" height="8.6" viewBox="0 0 9.4 8.6"><path d="M0 0 L9.4 4.3 L0 8.6 L1.6 4.9 L5.6 4.3 L1.6 3.7 Z" fill="#8c8c8c"/></svg>
<svg style="position:absolute;left:111.8px;top:236px;" width="9.4" height="10" viewBox="0 0 9.4 10"><path d="M0.5 0.5 H8.9 V6.6 L5.9 9.5 H0.5 Z" fill="none" stroke="#8c8c8c" stroke-width="1"/><path d="M5.9 9.5 V6.6 H8.9" fill="none" stroke="#8c8c8c" stroke-width="1"/><rect x="2" y="2" width="5.4" height="3.2" fill="#8c8c8c"/></svg>
<svg style="position:absolute;left:111.8px;top:263.4px;" width="8.8" height="10.2" viewBox="0 0 8.8 10.2"><rect x="0" y="0.5" width="8.8" height="1" fill="#8c8c8c"/><rect x="2.9" y="0" width="3" height="1" fill="#8c8c8c"/><rect x="0.5" y="2.3" width="7.8" height="7.9" rx=".5" fill="#8c8c8c"/><path d="M2.8 4.6 L6 7.8 M6 4.6 L2.8 7.8" stroke="#262626" stroke-width="1.1"/></svg>
<svg style="position:absolute;left:112.6px;top:293.6px;" width="6.8" height="4.6" viewBox="0 0 6.8 4.6"><path d="M0.5 4 L3.4 0.9 L6.3 4" fill="none" stroke="#6e6e6e" stroke-width="1"/></svg>
<svg style="position:absolute;left:112.6px;top:318.7px;" width="7.4" height="8.8" viewBox="0 0 7.4 8.8"><path d="M0 0 H4.2 Q4.8 0 5.1 .5 L7.4 4.4 L5.1 8.3 Q4.8 8.8 4.2 8.8 H0 L2.6 4.4 Z" fill="#8c8c8c"/></svg>
<svg style="position:absolute;left:110.8px;top:346px;" width="10.4" height="10.2" viewBox="0 0 10.4 10.2"><path d="M1.6 0 H8.8 Q10.4 0 10.4 1.6 V5.8 Q10.4 7.4 8.8 7.4 H4.6 L2 10.2 V7.4 H1.6 Q0 7.4 0 5.8 V1.6 Q0 0 1.6 0 Z" fill="#fff"/><g fill="#383838"><rect x="2.4" y="3.1" width="1.4" height="1.3"/><rect x="4.5" y="3.1" width="1.4" height="1.3"/><rect x="6.6" y="3.1" width="1.4" height="1.3"/></g></svg>
<svg style="position:absolute;left:107.7px;top:343.1px;" width="6" height="6" viewBox="0 0 6 6"><circle cx="3" cy="3" r="2.8" fill="#f0283c"/><text x="3" y="4.4" text-anchor="middle" font-family="Liberation Sans, sans-serif" font-size="4" fill="#fbb">2</text></svg>
<svg style="position:absolute;left:111px;top:372.6px;" width="9.8" height="10.8" viewBox="0 0 9.8 10.8"><rect x="0.5" y="1.5" width="8.8" height="8.8" rx="1" fill="none" stroke="#8c8c8c" stroke-width="1"/><path d="M0.5 3.9 H9.3 M2.6 0 V2 M7.2 0 V2" stroke="#8c8c8c" stroke-width="1"/><path d="M2.7 5 V9.6 M4.9 5 V9.6 M7.1 5 V9.6" stroke="#8c8c8c" stroke-width=".6"/></svg>
<svg style="position:absolute;left:111px;top:401.2px;" width="9.8" height="9.8" viewBox="0 0 9.8 9.8"><rect width="9.8" height="9.8" rx="1" fill="#8c8c8c"/><rect x="1" y="0.6" width="7.8" height="1" fill="#a8a8a8"/><path d="M4.1 3.6 H5.7 V5.2 H7.2 L4.9 7.6 L2.6 5.2 H4.1 Z" fill="#262626"/></svg>
<span class="t" style="top:80.40px;font-size:16.3px;color:#0b69e8;left:242.60px;letter-spacing:0.319px;font-weight:700;">Chat</span>
<span class="t" style="top:108.72px;font-size:8.6px;color:#b4b4b4;left:242.00px;letter-spacing:0.120px;">Pinned</span>
<span class="t" style="top:300.12px;font-size:8.6px;color:#b4b4b4;left:242.00px;letter-spacing:0.142px;">Recent</span>
<svg style="position:absolute;left:349.5px;top:84px;" width="13" height="12" viewBox="0 0 13 12"><path d="M0.3 1.5 H12.4 M1.9 4.5 H10.8 M3 7.5 H9.7 M4 10.5 H8.7" stroke="#a4a4a4" stroke-width=".9"/></svg>
<svg style="position:absolute;left:370.2px;top:83.8px;" width="13" height="13" viewBox="0 0 13 13"><path d="M6.6 0.6 A5.9 5.9 0 1 1 3.2 11.3 L0.8 12 L1.7 9.6 A5.9 5.9 0 0 1 6.6 0.6 Z" fill="none" stroke="#aaa" stroke-width=".9"/><path d="M6.6 3.9 V9.1 M4 6.5 H9.2" stroke="#aaa" stroke-width=".9"/></svg>
<div class="searchchat" style="position:absolute;left:395px;top:78px;width:78px;height:24.5px;background:#363636;border-radius:6px;"></div>
<svg style="position:absolute;left:404.6px;top:83.4px;" width="14" height="14" viewBox="0 0 14 14"><circle cx="7.8" cy="6" r="4.9" fill="none" stroke="#9a9a9a" stroke-width="1"/><path d="M4.4 9.6 L1 12.8" stroke="#9a9a9a" stroke-width="1.1" stroke-linecap="round"/></svg>
<span class="t m" style="top:87.41px;font-size:7.2px;color:#8a8a8a;left:424.40px;letter-spacing:-0.166px;">Search Chat</span>
<div class="rowsel" style="position:absolute;left:229px;top:122px;width:256px;height:39px;background:#4a4a4a;border-radius:0;"></div>
<span class="t" style="top:134.32px;font-size:8.6px;color:#f2f2f2;left:283.25px;letter-spacing:-0.042px;">Ava Sinclair</span>
<span class="t" style="top:146.08px;font-size:7.7px;color:#d0d0d0;left:283.25px;letter-spacing:0.091px;">Lorem ipsum dolor sit amet  Lorem ipsum dolor</span>
<span class="t" style="top:134.17px;font-size:7px;color:#d0d0d0;right:556.00px;">1:40 PM</span>
<svg class="av" style="left:242.45px;top:126.75px;width:30px;height:30px;" viewBox="0 0 100 100"><use href="#av-ava"/></svg>
<span class="t" style="top:176.12px;font-size:8.6px;color:#e4e4e4;left:283.25px;letter-spacing:-0.039px;">Julian Reyes &amp; Clara Rivers</span>
<span class="t" style="top:187.88px;font-size:7.7px;color:#b0b0b0;left:283.25px;letter-spacing:0.086px;">Lorem ipsum dolor sit amet  Lorem ipsum</span>
<span class="t" style="top:175.97px;font-size:7px;color:#b0b0b0;right:556.04px;letter-spacing:-0.039px;">1:43 PM</span>
<svg class="av" style="left:239.75px;top:167.75px;width:22px;height:22px;" viewBox="0 0 100 100"><use href="#av-jul"/></svg>
<svg class="av" style="left:252.50px;top:180.00px;width:22.2px;height:22.2px;box-shadow:0 0 0 .9px #dcdcdc;" viewBox="0 0 100 100"><use href="#av-cla"/></svg>
<span class="t" style="top:220.72px;font-size:8.6px;color:#f2f2f2;left:283.25px;letter-spacing:-0.191px;font-weight:700;">Lila Donovan</span>
<span class="t" style="top:232.48px;font-size:7.7px;color:#fff;left:283.25px;letter-spacing:-0.187px;font-weight:700;">Lorem ipsum dolor sit amet  Lorem ipsum</span>
<span class="t" style="top:220.57px;font-size:7px;color:#fff;right:556.72px;letter-spacing:0.278px;font-weight:700;">4/17/24</span>
<svg class="av" style="left:242.45px;top:213.10px;width:30px;height:30px;" viewBox="0 0 100 100"><use href="#av-lil"/></svg>
<div style="position:absolute;left:234px;top:226.8px;width:4.2px;height:4.2px;background:#0a6cff;border-radius:50%;"></div>
<span class="t" style="top:262.22px;font-size:8.6px;color:#e4e4e4;left:283.25px;letter-spacing:0.055px;">Malik Pierce</span>
<span class="t" style="top:273.98px;font-size:7.7px;color:#b0b0b0;left:283.25px;letter-spacing:0.091px;">Lorem ipsum dolor sit amet  Lorem ipsum dolor</span>
<span class="t" style="top:262.07px;font-size:7px;color:#b0b0b0;right:556.68px;letter-spacing:0.321px;">4/15/24</span>
<svg class="av" style="left:242.45px;top:255.00px;width:30px;height:30px;" viewBox="0 0 100 100"><use href="#av-mal"/></svg>
<span class="t" style="top:321.97px;font-size:8.6px;color:#e4e4e4;left:283.25px;letter-spacing:0.110px;">Zoe Carter</span>
<span class="t" style="top:333.73px;font-size:7.7px;color:#b0b0b0;left:283.25px;letter-spacing:0.098px;">Lorem ipsum dolor sit amet  Lorem ipsum dolor</span>
<span class="t" style="top:321.82px;font-size:7px;color:#b0b0b0;right:556.00px;">1:40 PM</span>
<svg class="av" style="left:242.45px;top:314.40px;width:30px;height:30px;" viewBox="0 0 100 100"><use href="#av-zoe"/></svg>
<span class="t" style="top:363.82px;font-size:8.6px;color:#f2f2f2;left:283.25px;letter-spacing:-0.012px;font-weight:700;">Theo Bennett</span>
<span class="t" style="top:375.58px;font-size:7.7px;color:#fff;left:283.25px;letter-spacing:-0.191px;font-weight:700;">Lorem ipsum dolor sit amet  Lorem ipsum dolor</span>
<span class="t" style="top:363.67px;font-size:7px;color:#fff;right:556.05px;letter-spacing:-0.051px;font-weight:700;">1:40 PM</span>
<svg class="av" style="left:242.45px;top:356.25px;width:30px;height:30px;" viewBox="0 0 100 100"><use href="#av-the"/></svg>
<div style="position:absolute;left:234px;top:370.45px;width:4.2px;height:4.2px;background:#0a6cff;border-radius:50%;"></div>
<span class="t" style="top:408.22px;font-size:8.6px;color:#e4e4e4;left:283.25px;letter-spacing:0.048px;">Nadia Brooks</span>
<span class="t" style="top:419.98px;font-size:7.7px;color:#b0b0b0;left:283.25px;letter-spacing:0.097px;">Lorem ipsum dolor sit amet</span>
<span class="t" style="top:408.07px;font-size:7px;color:#b0b0b0;right:556.00px;">1:40 PM</span>
<svg class="av" style="left:242.45px;top:400.70px;width:30px;height:30px;" viewBox="0 0 100 100"><use href="#av-nad"/></svg>
<span class="t" style="top:450.12px;font-size:8.6px;color:#e4e4e4;left:283.25px;letter-spacing:0.117px;">Elias Montgomery</span>
<span class="t" style="top:461.88px;font-size:7.7px;color:#b0b0b0;left:283.25px;letter-spacing:0.086px;">Lorem ipsum dolor sit amet  Lorem</span>
<span class="t" style="top:449.97px;font-size:7px;color:#b0b0b0;right:556.00px;">1:40 PM</span>
<svg class="av" style="left:242.45px;top:442.60px;width:30px;height:30px;" viewBox="0 0 100 100"><use href="#av-eli"/></svg>
<span class="t" style="top:495.12px;font-size:8.6px;color:#e4e4e4;left:283.25px;letter-spacing:-0.034px;">Clara Rivers</span>
<span class="t" style="top:506.88px;font-size:7.7px;color:#b0b0b0;left:283.25px;letter-spacing:0.086px;">Lorem ipsum dolor sit amet  Lorem</span>
<span class="t" style="top:494.97px;font-size:7px;color:#b0b0b0;right:556.00px;">1:40 PM</span>
<svg class="av" style="left:242.45px;top:487.50px;width:30px;height:30px;" viewBox="0 0 100 100"><use href="#av-cla"/></svg>
<span class="t" style="top:536.72px;font-size:8.6px;color:#e4e4e4;left:283.25px;">Xavier Hayes</span>
<span class="t" style="top:548.48px;font-size:7.7px;color:#b0b0b0;left:283.25px;letter-spacing:0.103px;">Lorem ipsum dolm ipsum dolor sit</span>
<span class="t" style="top:536.57px;font-size:7px;color:#b0b0b0;right:556.00px;">1:40 PM</span>
<svg class="av" style="left:242.45px;top:529.20px;width:30px;height:30px;" viewBox="0 0 100 100"><use href="#av-xav"/></svg>
<svg class="av" style="left:498.40px;top:66.40px;width:23.2px;height:23.2px;" viewBox="0 0 100 100"><use href="#av-ava"/></svg>
<span class="t" style="top:72.28px;font-size:10px;color:#f0f0f0;left:530.00px;letter-spacing:-0.123px;font-weight:700;">Ava Sinclair</span>
<div class="tabsel" style="position:absolute;left:827px;top:67.2px;width:33px;height:19px;background:#4a4a4a;border-radius:4.5px;"></div>
<span class="t" style="top:72.70px;font-size:9.1px;color:#f4f4f4;left:833.10px;letter-spacing:0.107px;font-weight:700;">Chat</span>
<span class="t" style="top:72.70px;font-size:9.1px;color:#888;left:872.00px;letter-spacing:-0.107px;font-weight:700;">Files</span>
<span class="t" style="top:72.70px;font-size:9.1px;color:#888;left:910.60px;letter-spacing:-0.219px;font-weight:700;">Group</span>
<span class="t" style="top:72.70px;font-size:9.1px;color:#888;left:956.20px;letter-spacing:-0.034px;font-weight:700;">Activity</span>
<svg class="av" style="left:700.90px;top:130.05px;width:96px;height:96px;" viewBox="0 0 100 100"><use href="#av-ava"/></svg>
<span class="t" style="top:236.96px;font-size:16px;color:#fff;left:703.70px;letter-spacing:0.041px;font-weight:700;">Ava Sinclair</span>
<span class="t" style="top:257.27px;font-size:10.2px;color:#787878;left:692.70px;letter-spacing:0.073px;">ave_sinclair@plax1.com</span>
<div class="bub" style="position:absolute;left:527.2px;top:364.1px;width:207.8px;height:40.7px;background:#3a3a3a;border-radius:5px;"></div>
<span class="t" style="top:374.17px;font-size:10.2px;color:#c8c8c8;left:537.30px;letter-spacing:0.087px;">Hey, James! Just checking in about the</span>
<span class="t" style="top:385.77px;font-size:10.2px;color:#c8c8c8;left:537.30px;letter-spacing:0.134px;">quarterly report. How’s it going?</span>
<span class="t" style="top:356.41px;font-size:5.3px;color:#6c6c6c;left:537.40px;letter-spacing:0.126px;">11:21 PM</span>
<svg class="av" style="left:496.10px;top:372.40px;width:24px;height:24px;" viewBox="0 0 100 100"><use href="#av-ava"/></svg>
<div class="bub me" style="position:absolute;left:759.4px;top:405.2px;width:233.5px;height:36.4px;background:#063f8f;border-radius:5px;"></div>
<span class="t" style="top:412.87px;font-size:10.2px;color:#a8bde1;right:38.31px;letter-spacing:0.092px;">Hey! Almost there. I’m finishing up the financial</span>
<span class="t" style="top:424.57px;font-size:10.2px;color:#a8bde1;right:38.33px;letter-spacing:0.070px;">section, should be all set by Friday</span>
<span class="t" style="top:396.81px;font-size:5.3px;color:#6c6c6c;right:38.57px;letter-spacing:0.126px;">11:22 PM</span>
<div class="bub" style="position:absolute;left:527.2px;top:438.2px;width:218.6px;height:40.6px;background:#3a3a3a;border-radius:5px;"></div>
<span class="t" style="top:449.07px;font-size:10.2px;color:#c8c8c8;left:537.30px;letter-spacing:0.051px;">Great, sounds good! Just making sure we’re</span>
<span class="t" style="top:460.87px;font-size:10.2px;color:#c8c8c8;left:537.30px;letter-spacing:0.048px;">on track for Monday. Need any help?</span>
<span class="t" style="top:430.51px;font-size:5.3px;color:#6c6c6c;left:537.40px;letter-spacing:0.126px;">11:22 PM</span>
<svg class="av" style="left:496.10px;top:446.80px;width:24px;height:24px;" viewBox="0 0 100 100"><use href="#av-ava"/></svg>
<div class="bub me" style="position:absolute;left:777.6px;top:476.4px;width:215.29999999999995px;height:36.3px;background:#063f8f;border-radius:5px;"></div>
<span class="t" style="top:484.37px;font-size:10.2px;color:#a8bde1;right:38.33px;letter-spacing:0.069px;">I think I’m good for now, but I’ll let you know</span>
<span class="t" style="top:496.07px;font-size:10.2px;color:#a8bde1;right:38.24px;letter-spacing:0.160px;">if I run into anything. Appreciate the offer!</span>
<span class="t" style="top:468.71px;font-size:5.3px;color:#6c6c6c;right:38.57px;letter-spacing:0.126px;">11:23 PM</span>
<div class="bub" style="position:absolute;left:527.2px;top:512.5px;width:237.3px;height:40.5px;background:#3a3a3a;border-radius:5px;"></div>
<span class="t" style="top:520.67px;font-size:10.2px;color:#c8c8c8;left:537.30px;letter-spacing:0.048px;">No problem! Let me know if you need a second</span>
<span class="t" style="top:532.27px;font-size:10.2px;color:#c8c8c8;left:537.30px;letter-spacing:0.038px;">set of eyes. I can look it over when you’re done.</span>
<span class="t" style="top:504.61px;font-size:5.3px;color:#6c6c6c;left:537.40px;letter-spacing:0.126px;">11:22 PM</span>
<svg class="av" style="left:496.10px;top:518.60px;width:24px;height:24px;" viewBox="0 0 100 100"><use href="#av-ava"/></svg>
<div class="bub me" style="position:absolute;left:820.3px;top:547.5px;width:172.60000000000002px;height:36.4px;background:#063f8f;border-radius:5px;"></div>
<span class="t" style="top:555.67px;font-size:10.2px;color:#a8bde1;right:38.32px;letter-spacing:0.082px;">Will do! Thanks for checking in.</span>
<span class="t" style="top:567.57px;font-size:10.2px;color:#a8bde1;right:38.35px;letter-spacing:0.054px;">I’ll keep you posted.</span>
<span class="t" style="top:540.81px;font-size:5.3px;color:#6c6c6c;right:38.57px;letter-spacing:0.126px;">11:23 PM</span>
<div class="bub" style="position:absolute;left:527.2px;top:585.2px;width:105.8px;height:24.4px;background:#3a3a3a;border-radius:5px;"></div>
<span class="t" style="top:592.27px;font-size:10.2px;color:#c8c8c8;left:537.30px;letter-spacing:0.103px;">Perfect, talk soon!</span>
<span class="t" style="top:576.21px;font-size:5.3px;color:#6c6c6c;left:537.40px;letter-spacing:0.126px;">11:24 PM</span>
<svg class="av" style="left:496.10px;top:584.70px;width:24px;height:24px;" viewBox="0 0 100 100"><use href="#av-ava"/></svg>
<span class="t" style="top:586.77px;font-size:6.3px;color:#626262;right:38.24px;letter-spacing:0.160px;font-style:italic;">seen</span>
<svg style="position:absolute;left:505.4px;top:647.4px;" width="17.4" height="17.4" viewBox="0 0 17.4 17.4"><circle cx="8.7" cy="8.7" r="7.9" fill="none" stroke="#a8a8a8" stroke-width="1.2"/><path d="M8.7 4.2 V13.2 M4.2 8.7 H13.2" stroke="#a8a8a8" stroke-width="1.3"/></svg>
<div class="input" style="position:absolute;left:528.6px;top:638.2px;width:429px;height:37px;background:#1c1c1c;border-radius:18.5px;"></div>
<span class="t m" style="top:651.95px;font-size:10.1px;color:#4f4f4f;left:544.60px;letter-spacing:0.059px;">Type a new message</span>
<svg style="position:absolute;left:812.8px;top:649.8px;" width="12.4" height="12.8" viewBox="-6.2 -6.4 12.4 12.8"><g transform="rotate(45) scale(.84)"><path d="M2.8 -3.4 V3.9 A2.8 2.8 0 0 1 -2.8 3.9 V-4.7 A1.95 1.95 0 0 1 1.1 -4.7 V3.3 A1.1 1.1 0 0 1 -1.1 3.3 V-3" fill="none" stroke="#999" stroke-width="1.05" stroke-linecap="round"/></g></svg>
<svg style="position:absolute;left:833.2px;top:651.4px;" width="13" height="10.2" viewBox="0 0 13 10.2"><rect x=".5" y=".5" width="12" height="9.2" rx=".8" fill="none" stroke="#999" stroke-width=".9"/><path d="M1.4 8.8 L4.6 5.4 L6.6 7.2 L9 4.2 L11.6 8.8 Z" fill="#999"/><circle cx="3.2" cy="2.9" r=".9" fill="#999"/></svg>
<svg style="position:absolute;left:853.4px;top:651.2px;" width="8" height="10.4" viewBox="0 0 8 10.4"><path d="M0.5 9.9 L4 0.9 L7.5 9.9 M1.7 6.8 H6.3" fill="none" stroke="#999" stroke-width="1"/></svg>
<svg style="position:absolute;left:868.6px;top:651.1px;" width="11.2" height="11.2" viewBox="0 0 11.2 11.2"><circle cx="5.6" cy="5.6" r="5.1" fill="none" stroke="#999" stroke-width=".9"/><circle cx="3.9" cy="4.4" r=".7" fill="#999"/><circle cx="7.3" cy="4.4" r=".7" fill="#999"/><path d="M3.2 6.6 Q5.6 9.2 8 6.6" fill="none" stroke="#999" stroke-width=".9"/></svg>
<svg style="position:absolute;left:887.7px;top:651.4px;" width="12.4" height="10.6" viewBox="0 0 12.4 10.6"><rect x=".5" y=".5" width="11.4" height="9.6" rx="1.6" fill="none" stroke="#999" stroke-width=".9"/><text x="6.2" y="7.4" text-anchor="middle" font-family="Liberation Sans, sans-serif" font-weight="700" font-size="5.6" fill="#999">GIF</text></svg>
<svg style="position:absolute;left:908.6px;top:651.2px;" width="11" height="11" viewBox="0 0 11 11"><path d="M.6 7.4 V10.4 H10.4 V7.4 M5.5 8 V1.2 M2.8 3.8 L5.5 1 L8.2 3.8" fill="none" stroke="#999" stroke-width="1.1"/></svg>
<svg style="position:absolute;left:927.2px;top:652px;" width="14" height="9.4" viewBox="0 0 14 9.4"><rect x=".5" y=".5" width="10.2" height="8.4" rx="1.2" fill="none" stroke="#999" stroke-width=".9"/><path d="M11 3.6 L13.5 1.4 V8 L11 5.8 Z" fill="#999"/></svg>
<svg style="position:absolute;left:966.4px;top:647.8px;" width="18.4" height="15.8" viewBox="0 0 18.4 15.8"><path d="M1.2 0.3 L17.6 7 Q18.4 7.9 17.6 8.8 L1.2 15.5 Q0 15.8 0.3 14.4 L2.6 8.9 L9.4 7.9 L2.6 6.9 L0.3 1.4 Q0 0 1.2 0.3 Z" fill="#0a6cff"/></svg>
</div>
</body></html>
